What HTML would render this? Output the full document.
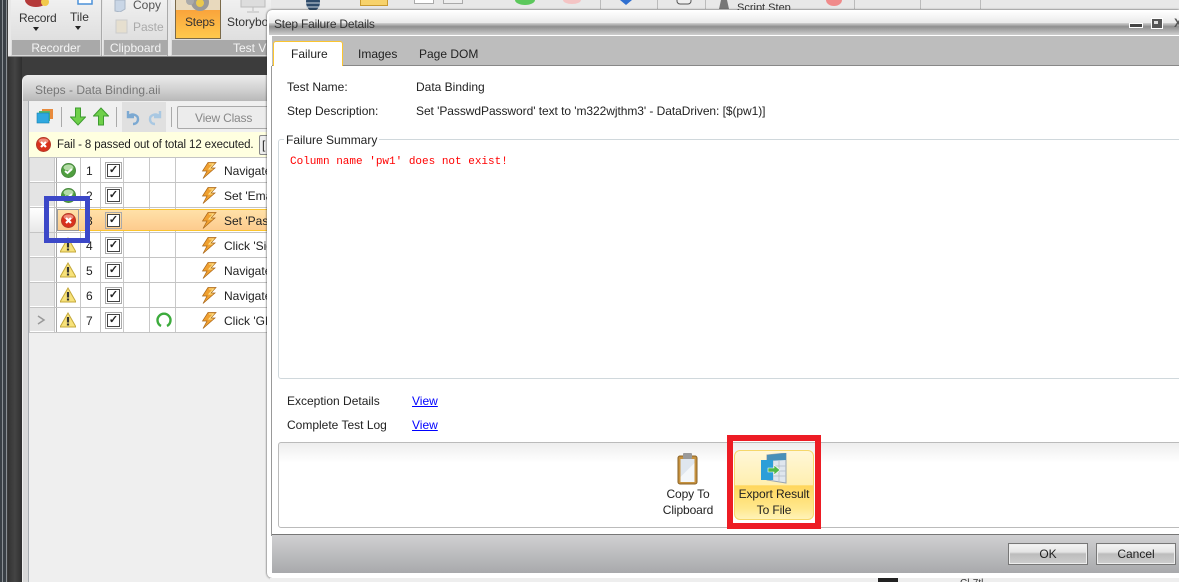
<!DOCTYPE html>
<html><head><meta charset="utf-8"><style>
html,body{margin:0;padding:0;width:1179px;height:582px;overflow:hidden}
body{background:#404040;font:12px "Liberation Sans",sans-serif;color:#222}
div,svg,span,a{position:absolute}
#root{left:0;top:0;width:1179px;height:582px;overflow:hidden;background:#3c3c3c}
.t{white-space:nowrap;line-height:14px}
.rh{left:30px;width:24px;height:23px;background:#e4e4e4}
.lv{width:1px;top:158px;height:175px;background:#c8c8c8}
.lh{left:29px;width:238px;height:1px;background:#c4c4c4}
.cb{left:107px;width:11px;height:11px;border:1px solid #444;background:#fff;outline:1px solid #aaa;outline-offset:1px;font:bold 11px/11px "Liberation Sans",sans-serif;text-align:center;color:#222}
.btn{box-sizing:border-box;border:1px solid #777;outline:1px solid #eee;outline-offset:-2px;background:linear-gradient(#f4f4f4 0,#e4e4e4 40%,#bcbcbc 50%,#cfcfcf 100%);text-align:center;line-height:20px;color:#222}
.sep{top:0;width:1px;height:9px;background:#bbb}
</style></head><body>
<svg width="0" height="0" style="left:0;top:0"><defs>
<g id="ok"><circle cx="7.5" cy="7.5" r="7" fill="#4f9f3f" stroke="#4a8a40"/><ellipse cx="7.5" cy="4.500" rx="5" ry="3" fill="#b5dca8"/><path d="M4 8l2.500 2L11 6" fill="none" stroke="#fff" stroke-width="2"/></g>
<g id="err"><circle cx="7.5" cy="7.5" r="7" fill="#d9301c" stroke="#b53a28"/><ellipse cx="7.5" cy="4" rx="5" ry="2.500" fill="#ef8b7a"/><path d="M5 5l5 5M10 5l-5 5" stroke="#fff" stroke-width="2.200"/></g>
<g id="warn"><path d="M8 1L16 15H0z" fill="#f7e27a" stroke="#c4a83a"/><path d="M8 5v5.500" stroke="#333" stroke-width="2.200"/><rect x="6.900" y="11.500" width="2.200" height="2" fill="#333"/></g>
<g id="bolt"><path d="M7 .5h8L10 6h4L2 16.500l4-7.500H1.500z" fill="#f0a030" stroke="#a9671a" stroke-width=".7"/><path d="M8 2h4.500L8 7h3.500" fill="none" stroke="#fbe38d" stroke-width="1"/></g>
</defs></svg>
<div id="root">

<!-- dark side strip -->
<div style="left:0;top:0;width:7px;height:582px;background:#3a4046"></div>
<div style="left:2px;top:0;width:1px;height:582px;background:#8a8f94"></div>
<div style="left:6px;top:0;width:1px;height:582px;background:#8a8f94"></div>
<div style="left:8px;top:57px;width:14px;height:525px;background:linear-gradient(90deg,#333,#444 50%,#2e2e2e)"></div>

<!-- ribbon -->
<div style="left:8px;top:0;width:1171px;height:57px;background:#e8e8e8;border-bottom:1px solid #8a8a8a;box-sizing:border-box"></div>
<div style="left:11px;top:0;width:90px;height:56px;background:linear-gradient(#f0f0f0,#d8d8d8);border-right:1px solid #aaa"></div>
<div style="left:12px;top:40px;width:88px;height:15px;background:#a9a9a9"></div>
<div class="t" style="left:12px;top:41px;width:88px;text-align:center;color:#f4f4f4">Recorder</div>
<div style="left:103px;top:0;width:64px;height:56px;background:linear-gradient(#f0f0f0,#d8d8d8);border-right:1px solid #aaa"></div>
<div style="left:104px;top:40px;width:63px;height:15px;background:#a9a9a9"></div>
<div class="t" style="left:104px;top:41px;width:63px;text-align:center;color:#f4f4f4">Clipboard</div>
<div style="left:171px;top:0;width:100px;height:56px;background:linear-gradient(#f0f0f0,#d8d8d8)"></div>
<div style="left:172px;top:40px;width:100px;height:15px;background:#a9a9a9"></div>
<div class="t" style="left:233px;top:41px;color:#f4f4f4">Test Vi</div>
<svg style="left:22px;top:0" width="30" height="10"><ellipse cx="14" cy="0" rx="11" ry="7" fill="#b53a3a"/><circle cx="23" cy="2" r="4" fill="#f2c94c"/></svg>
<div class="t" style="left:19px;top:11px;color:#333;letter-spacing:-.2px">Record</div>
<div style="left:33px;top:27px;border:3px solid transparent;border-top:4px solid #222"></div>
<svg style="left:76px;top:0" width="18" height="6"><rect x="2" y="-4" width="14" height="8" fill="#fff" stroke="#4a90d9" stroke-width="1.500"/></svg>
<div class="t" style="left:70px;top:10px;color:#333">Tile</div>
<div style="left:75px;top:26px;border:3px solid transparent;border-top:4px solid #222"></div>
<svg style="left:114px;top:0" width="14" height="12"><path d="M1 0h10v9l-5 3-5-1z" fill="#c9d6e6" stroke="#a9b6c6"/></svg>
<div class="t" style="left:133px;top:-2px;color:#555">Copy</div>
<svg style="left:115px;top:18px" width="14" height="16"><rect x="1" y="2" width="11" height="13" fill="#e6dfcf" stroke="#ccc"/></svg>
<div class="t" style="left:133px;top:20px;color:#aaa">Paste</div>
<div style="left:175px;top:0;width:46px;height:39px;box-sizing:border-box;border:1px solid #7a6a4a;border-top:0;background:linear-gradient(#f2a04a 0,#f9a33b 25%,#ffc94d 100%)"></div>
<div style="left:176px;top:0;width:44px;height:10px;background:#e8d9bd"></div>
<svg style="left:184px;top:0" width="32" height="15"><circle cx="16" cy="2" r="9" fill="#999"/><circle cx="16" cy="3" r="4" fill="#e9c84e"/><circle cx="6" cy="1" r="4" fill="#aaa"/></svg>
<div class="t" style="left:185px;top:15px;color:#333;letter-spacing:-.2px">Steps</div>
<div class="t" style="left:227px;top:15px;color:#333">Storyboard</div>
<svg style="left:240px;top:0" width="30" height="13"><rect x="1" y="-3" width="24" height="10" fill="#ddd" stroke="#bbb"/><path d="M13 7v4M7 12h12" stroke="#bbb"/></svg>
<svg style="left:303px;top:0" width="20" height="12"><ellipse cx="10" cy="2" rx="7" ry="9" fill="#2d4a6a"/><path d="M3 3h14M3 7h14" stroke="#cfd8e0"/></svg>
<!-- ribbon remains, right -->
<div style="left:360px;top:0;width:26px;height:5px;background:#f7d26b;border:1px solid #c99a30;border-top:0"></div>
<div style="left:414px;top:0;width:18px;height:3px;background:#fff;border:1px solid #aaa;border-top:0"></div>
<div style="left:443px;top:0;width:18px;height:3px;background:#eee;border:1px solid #aaa;border-top:0"></div>
<div class="sep" style="left:600px"></div><div class="sep" style="left:657px"></div><div class="sep" style="left:705px"></div><div class="sep" style="left:854px"></div><div class="sep" style="left:920px"></div><div class="sep" style="left:980px"></div>
<svg style="left:512px;top:0" width="140" height="10"><ellipse cx="13" cy="0" rx="10" ry="5" fill="#5cc85c"/><ellipse cx="60" cy="0" rx="9" ry="4" fill="#f4c4c4"/><path d="M108 0h12l-6 5z" fill="#2f6fd0"/></svg>
<svg style="left:675px;top:0" width="18" height="8"><rect x="2" y="-4" width="14" height="8" rx="3" fill="#eee" stroke="#555"/></svg>
<svg style="left:718px;top:0" width="14" height="10"><path d="M3 0h6l2 9H1z" fill="#777"/></svg>
<div class="t" style="left:737px;top:1px;font-size:11px;color:#333">Script Step</div>
<svg style="left:824px;top:0" width="20" height="8"><ellipse cx="10" cy="0" rx="8" ry="6" fill="#f08a8a"/></svg>

<!-- Steps window -->
<div style="left:22px;top:75px;width:250px;height:507px;background:#efefef;border-radius:6px 0 0 0"></div>
<div style="left:23px;top:75px;width:250px;height:26px;background:linear-gradient(#ececec,#cfcfcf 60%,#b8b8b8);border-radius:6px 0 0 0"></div>
<div class="t" style="left:35px;top:83px;color:#777">Steps - Data Binding.aii</div>
<div style="left:23px;top:101px;width:6px;height:481px;background:#d8d8d8;border-right:1px solid #a8adb2;box-sizing:border-box"></div>
<div style="left:30px;top:102px;width:240px;height:30px;background:#f0f0f0"></div>
<svg style="left:36px;top:108px" width="18" height="17"><rect x="6" y="1" width="11" height="10" fill="#e88a3c"/><rect x="3" y="3" width="11" height="10" fill="#58b868"/><rect x="1" y="5" width="12" height="10" fill="#2fa8e0" stroke="#1780b0" stroke-width=".6"/></svg>
<div style="left:61px;top:107px;width:1px;height:20px;background:#aaa"></div>
<svg style="left:70px;top:107px" width="16" height="19"><path d="M5 1h5v9h5l-7.500 8L0 10h5z" fill="#6fd04a" stroke="#3e9c30" transform="translate(0.5,0)"/></svg>
<svg style="left:93px;top:107px" width="16" height="19"><path d="M5 18h5V9h5L7.500 1 0 9h5z" fill="#6fd04a" stroke="#3e9c30" transform="translate(0.5,0)"/></svg>
<div style="left:116px;top:107px;width:1px;height:20px;background:#aaa"></div>
<div style="left:122px;top:102px;width:44px;height:30px;background:#e0e0e0"></div>
<svg style="left:125px;top:109px" width="16" height="17"><path d="M3 2v6h6M4 7c3-3 9-1 9 3 0 3-2 5-5 5" fill="none" stroke="#7ca9d2" stroke-width="2.400"/></svg>
<svg style="left:147px;top:109px" width="16" height="17"><path d="M13 2v6H7M12 7C9 4 3 6 3 10c0 3 2 5 5 5" fill="none" stroke="#a9c8e2" stroke-width="2.400"/></svg>
<div style="left:171px;top:107px;width:1px;height:20px;background:#aaa"></div>
<div style="left:177px;top:106px;width:100px;height:23px;box-sizing:border-box;border:1px solid #aaa;border-radius:2px;background:#ececec"></div>
<div class="t" style="left:195px;top:111px;color:#888;letter-spacing:-.2px">View Class</div>
<!-- status bar -->
<div style="left:29px;top:132px;width:240px;height:26px;background:#ffffe0;border-bottom:1px solid #bbb;box-sizing:border-box"></div>
<svg style="left:36px;top:137px" width="15" height="15"><use href="#err"/></svg>
<div class="t" style="left:57px;top:138px;color:#222;font-size:11.5px;letter-spacing:-.12px">Fail - 8 passed out of total 12 executed.</div>
<div style="left:259px;top:135px;width:12px;height:20px;box-sizing:border-box;border:1px solid #888;border-radius:2px;background:#eee"></div>
<div class="t" style="left:262px;top:138px">[</div>

<!-- grid -->
<div style="left:29px;top:158px;width:240px;height:175px;background:#fff"></div>
<div style="left:29px;top:158px;width:26px;height:175px;background:#fff"></div>
<div class="rh" style="top:158px"></div><div class="rh" style="top:183px"></div><div class="rh" style="top:233px"></div><div class="rh" style="top:258px"></div><div class="rh" style="top:283px"></div><div class="rh" style="top:308px"></div>
<div class="lv" style="left:29px"></div>
<div class="lv" style="left:54px"></div>
<div class="lv" style="left:56px;background:#a8a8a8"></div>
<div class="lv" style="left:80px"></div><div class="lv" style="left:100px"></div><div class="lv" style="left:123px"></div><div class="lv" style="left:149px"></div><div class="lv" style="left:175px"></div>
<div style="left:30px;top:208px;width:24px;height:24px;background:linear-gradient(#fff,#e8e8e8)"></div>
<div style="left:57px;top:209px;width:212px;height:22px;background:linear-gradient(#ffe1a8,#fdcb8e);border-top:1px solid #fbc52f;border-bottom:1px solid #fbc52f;box-sizing:border-box"></div>
<div style="left:57px;top:209px;width:22px;height:22px;box-sizing:border-box;border:1px solid #999"></div>
<div class="lh" style="top:157px"></div><div class="lh" style="top:182px"></div><div class="lh" style="top:207px"></div><div class="lh" style="top:232px"></div><div class="lh" style="top:257px"></div><div class="lh" style="top:282px"></div><div class="lh" style="top:307px"></div><div class="lh" style="top:332px"></div>

<svg style="left:61px;top:163px" width="15" height="15"><use href="#ok"/></svg>
<svg style="left:61px;top:188px" width="15" height="15"><use href="#ok"/></svg>
<svg style="left:61px;top:213px" width="15" height="15"><use href="#err"/></svg>
<svg style="left:60px;top:237px" width="16" height="16"><use href="#warn"/></svg>
<svg style="left:60px;top:262px" width="16" height="16"><use href="#warn"/></svg>
<svg style="left:60px;top:287px" width="16" height="16"><use href="#warn"/></svg>
<svg style="left:60px;top:312px" width="16" height="16"><use href="#warn"/></svg>
<div class="t" style="left:86px;top:164px">1</div>
<div class="t" style="left:86px;top:189px">2</div>
<div class="t" style="left:86px;top:214px">3</div>
<div class="t" style="left:86px;top:239px">4</div>
<div class="t" style="left:86px;top:264px">5</div>
<div class="t" style="left:86px;top:289px">6</div>
<div class="t" style="left:86px;top:314px">7</div>
<div class="cb" style="top:164px">✓</div><div class="cb" style="top:189px">✓</div><div class="cb" style="top:214px">✓</div><div class="cb" style="top:239px">✓</div><div class="cb" style="top:264px">✓</div><div class="cb" style="top:289px">✓</div><div class="cb" style="top:314px">✓</div>
<svg style="left:155px;top:311px" width="18" height="18"><path d="M6 15A6.500 6.500 0 1 1 12 15" fill="none" stroke="#3cab3c" stroke-width="2.400"/></svg>
<svg style="left:201px;top:162px" width="16" height="17"><use href="#bolt"/></svg>
<svg style="left:201px;top:187px" width="16" height="17"><use href="#bolt"/></svg>
<svg style="left:201px;top:212px" width="16" height="17"><use href="#bolt"/></svg>
<svg style="left:201px;top:237px" width="16" height="17"><use href="#bolt"/></svg>
<svg style="left:201px;top:262px" width="16" height="17"><use href="#bolt"/></svg>
<svg style="left:201px;top:287px" width="16" height="17"><use href="#bolt"/></svg>
<svg style="left:201px;top:312px" width="16" height="17"><use href="#bolt"/></svg>
<div class="t" style="left:224px;top:164px">Navigate</div>
<div class="t" style="left:224px;top:189px">Set 'Email</div>
<div class="t" style="left:224px;top:214px">Set 'Pass</div>
<div class="t" style="left:224px;top:239px">Click 'Sign</div>
<div class="t" style="left:224px;top:264px">Navigate</div>
<div class="t" style="left:224px;top:289px">Navigate</div>
<div class="t" style="left:224px;top:314px">Click 'GE</div>
<svg style="left:36px;top:314px" width="10" height="12"><path d="M2 2l6 4-6 4" fill="none" stroke="#999" stroke-width="1.500"/></svg>

<!-- Blue highlight -->
<div style="left:44px;top:196px;width:46px;height:47px;box-sizing:border-box;border:5px solid #3c48c8"></div>

<!-- Dialog -->
<div style="left:267px;top:10px;width:912px;height:568px;background:#fff;border-radius:5px 0 0 5px;box-shadow:0 0 2px #333"></div>
<div style="left:269px;top:11px;width:910px;height:12px;background:linear-gradient(#fff,#eaeaea)"></div>
<div style="left:269px;top:23px;width:910px;height:12px;background:linear-gradient(#d2d2d2,#8f8f8f 30%,#cfcfcf)"></div>
<div class="t" style="left:274px;top:17px;color:#333;letter-spacing:-.2px">Step Failure Details</div>
<div style="left:1129px;top:23px;width:12px;height:3px;background:#444;border:1px solid #fff"></div>
<div style="left:1151px;top:18px;width:10px;height:9px;border:1px solid #fff;background:#555"></div>
<div style="left:1154px;top:21px;width:4px;height:3px;background:#ddd"></div>
<div class="t" style="left:1174px;top:16px;color:#555;font-weight:bold">X</div>
<!-- Tabs -->
<div style="left:272px;top:36px;width:907px;height:30px;background:#bdbdbd;border-bottom:1px solid #888;box-sizing:border-box"></div>
<div style="left:273px;top:41px;width:70px;height:25px;box-sizing:border-box;background:#fff;border:1px solid #fbc52f;border-bottom:0;border-radius:3px 3px 0 0"></div>
<div class="t" style="left:291px;top:47px">Failure</div>
<div class="t" style="left:358px;top:47px">Images</div>
<div class="t" style="left:419px;top:47px">Page DOM</div>
<div style="left:271px;top:66px;width:1px;height:470px;background:#999"></div>

<div class="t" style="left:287px;top:80px">Test Name:</div>
<div class="t" style="left:416px;top:80px">Data Binding</div>
<div class="t" style="left:287px;top:104px">Step Description:</div>
<div class="t" style="left:416px;top:104px;letter-spacing:-.06px">Set 'PasswdPassword' text to 'm322wjthm3' - DataDriven: [$(pw1)]</div>

<div style="left:278px;top:139px;width:920px;height:240px;box-sizing:border-box;border:1px solid #d0d8dc;border-radius:3px"></div>
<div class="t" style="left:284px;top:133px;background:#fff;padding:0 2px">Failure Summary</div>
<div class="t" style="left:290px;top:155px;color:#f00;font:11px/14px 'Liberation Mono',monospace">Column name 'pw1' does not exist!</div>

<div class="t" style="left:287px;top:394px">Exception Details</div>
<a class="t" style="left:412px;top:394px;color:#00f;text-decoration:underline">View</a>
<div class="t" style="left:287px;top:418px">Complete Test Log</div>
<a class="t" style="left:412px;top:418px;color:#00f;text-decoration:underline">View</a>

<!-- Bottom panel -->
<div style="left:278px;top:442px;width:920px;height:86px;box-sizing:border-box;border:1px solid #bbb;border-radius:3px;background:linear-gradient(#eeeeee 0,#fff 20px)"></div>
<svg style="left:677px;top:453px" width="21" height="32"><rect x="1" y="3" width="19" height="28" rx="2" fill="#c6923f" stroke="#8a6226"/><rect x="3.500" y="6" width="14" height="23" fill="#dfe6ee"/><path d="M3.500 24L17.500 10v19H3.500z" fill="#f3f6f9"/><rect x="6" y="0" width="9" height="6" rx="1" fill="#9a9a9a"/></svg>
<div class="t" style="left:648px;top:486px;width:80px;text-align:center;line-height:16px;letter-spacing:-.1px">Copy To<br>Clipboard</div>

<div style="left:734px;top:450px;width:80px;height:70px;box-sizing:border-box;border:1px solid #f5d76a;border-radius:6px;background:linear-gradient(#fff7d8 0,#ffefb0 50%,#ffd65c 51%,#ffe88e 85%,#fff2b8 100%)"></div>
<svg style="left:760px;top:453px" width="28" height="32"><path d="M7 2l19-2v30l-19-3z" fill="#dfe6ee" stroke="#9aa5b0"/><path d="M7 2l19-2v7L7 8z" fill="#4a90b8"/><path d="M13 8v19M19 7v21M7 13h19M7 18h19M7 23h19" stroke="#b3bdc8" stroke-width=".8"/><rect x="1" y="7" width="12" height="20" fill="#2c9ed8"/><path d="M8 15h6v-3l6 5-6 5v-3H8z" fill="#4fb848" stroke="#fff" stroke-width=".6"/></svg>
<div class="t" style="left:734px;top:486px;width:80px;text-align:center;line-height:16px;letter-spacing:-.1px">Export Result<br>To File</div>

<!-- Red highlight -->
<div style="left:727px;top:435px;width:94px;height:94px;box-sizing:border-box;border:6px solid #ed1c24"></div>

<!-- Footer -->
<div style="left:272px;top:534px;width:907px;height:39px;box-sizing:border-box;border-top:1px solid #777;background:linear-gradient(#d0d0d2,#a8a9ac)"></div>
<div class="btn" style="left:1008px;top:543px;width:80px;height:22px">OK</div>
<div class="btn" style="left:1096px;top:543px;width:80px;height:22px">Cancel</div>

<!-- below dialog -->
<div style="left:270px;top:578px;width:909px;height:4px;background:#eee"></div>
<div style="left:878px;top:578px;width:20px;height:4px;background:#222"></div>
<div class="t" style="left:960px;top:577px;font-size:10px;color:#333">Cl-7tl</div>
</div>
</body></html>
